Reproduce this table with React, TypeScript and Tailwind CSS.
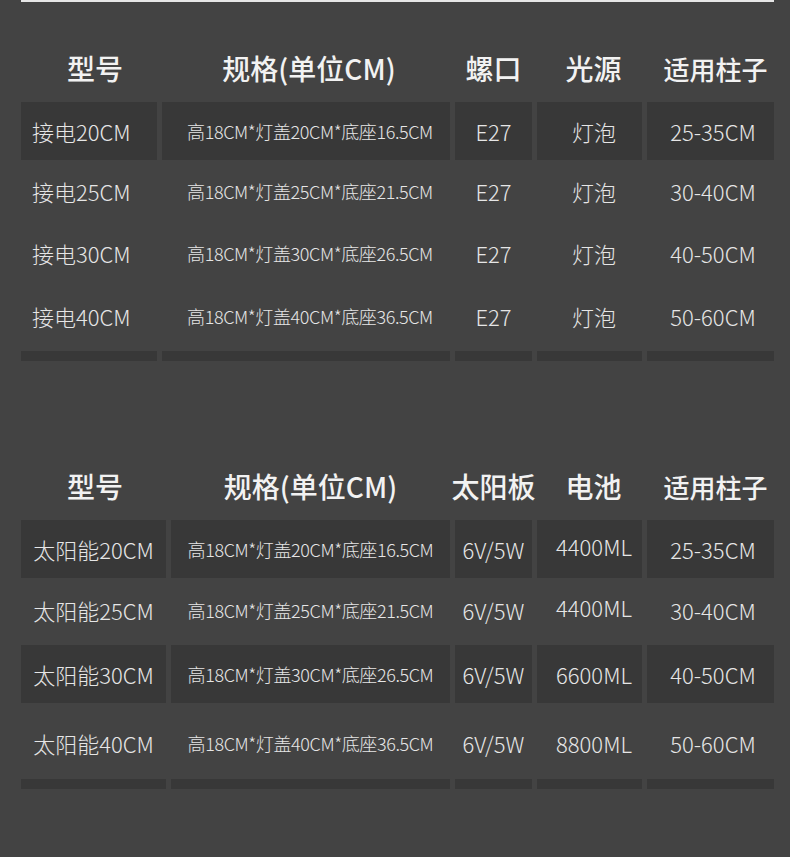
type Col = {
  w: string;
  head: string;
  cell: string;
};

type Row = {
  mt: string;
  shaded: boolean;
  cells: string[];
};

const shared: Col[] = [
  { w: "w-[77px]", head: "text-[28px]", cell: "text-[22px]" },
  { w: "w-[105px]", head: "pl-[8px] text-[28px]", cell: "pl-[9px] text-[22px]" },
  { w: "w-[127px]", head: "pl-[10px] text-[26px]", cell: "pl-[5px] text-[22px]" },
];

const wiredCols: Col[] = [
  { w: "w-[136px]", head: "pl-[12px] text-[28px]", cell: "justify-start pl-[11px] text-[22px]" },
  { w: "w-[288px]", head: "pl-[6px] text-[28px]", cell: "pl-[8px] text-[18px] tracking-[-0.4px]" },
  ...shared,
];

const solarCols: Col[] = [
  { w: "w-[145px]", head: "pl-[3px] text-[28px]", cell: "text-[22px]" },
  { w: "w-[279px]", head: "text-[28px]", cell: "text-[18px] tracking-[-0.4px]" },
  ...shared,
];

const wiredRows: Row[] = [
  { mt: "mt-[14px]", shaded: true, cells: ["接电20CM", "高18CM*灯盖20CM*底座16.5CM", "E27", "灯泡", "25-35CM"] },
  { mt: "mt-[2px]", shaded: false, cells: ["接电25CM", "高18CM*灯盖25CM*底座21.5CM", "E27", "灯泡", "30-40CM"] },
  { mt: "mt-[4px]", shaded: false, cells: ["接电30CM", "高18CM*灯盖30CM*底座26.5CM", "E27", "灯泡", "40-50CM"] },
  { mt: "mt-[5px]", shaded: false, cells: ["接电40CM", "高18CM*灯盖40CM*底座36.5CM", "E27", "灯泡", "50-60CM"] },
];

const solarRows: Row[] = [
  { mt: "mt-[14px]", shaded: true, cells: ["太阳能20CM", "高18CM*灯盖20CM*底座16.5CM", "6V/5W", "4400ML", "25-35CM"] },
  { mt: "mt-[3px]", shaded: false, cells: ["太阳能25CM", "高18CM*灯盖25CM*底座21.5CM", "6V/5W", "4400ML", "30-40CM"] },
  { mt: "mt-[6px]", shaded: true, cells: ["太阳能30CM", "高18CM*灯盖30CM*底座26.5CM", "6V/5W", "6600ML", "40-50CM"] },
  { mt: "mt-[11px]", shaded: false, cells: ["太阳能40CM", "高18CM*灯盖40CM*底座36.5CM", "6V/5W", "8800ML", "50-60CM"] },
];

const SpecTable = ({
  cols,
  heads,
  rows,
  stripMt,
}: {
  cols: Col[];
  heads: string[];
  rows: Row[];
  stripMt: string;
}) => {
  return (
    <div className="flex flex-col">
      {/* Header */}
      <div className="flex h-[40px] gap-[5px]">
        {heads.map((h, i) => (
          <div
            key={h}
            className={`${cols[i].w} ${cols[i].head} flex shrink-0 items-center justify-center whitespace-nowrap font-medium text-[#f2f2f2]`}
          >
            {h}
          </div>
        ))}
      </div>

      {/* Rows */}
      {rows.map((r) => (
        <div key={r.cells[0]} className={`${r.mt} flex h-[58px] gap-[5px]`}>
          {r.cells.map((c, i) => (
            <div
              key={i}
              className={`${cols[i].w} ${cols[i].cell} ${r.shaded ? "bg-[#383838]" : ""} flex shrink-0 items-center justify-center whitespace-nowrap font-light text-[#e6e6e6]`}
            >
              <span className={c.endsWith("ML") && c.startsWith("44") ? "-mt-[5px]" : ""}>{c}</span>
            </div>
          ))}
        </div>
      ))}

      {/* Cut-off row */}
      <div className={`${stripMt} flex h-[10px] gap-[5px]`}>
        {cols.map((c, i) => (
          <div key={i} className={`${c.w} shrink-0 bg-[#383838]`} />
        ))}
      </div>
    </div>
  );
};

export default function App() {
  return (
    <div
      className="h-[857px] w-[790px] bg-[#434343] pl-[21px] pr-[16px]"
      style={{ fontFamily: '"Noto Sans CJK SC", "Noto Sans", sans-serif' }}
    >
      <div className="h-[2px] w-[753px] bg-[#e6e6e6]" />

      <div className="mt-[46px]">
        <SpecTable
          cols={wiredCols}
          heads={["型号", "规格(单位CM)", "螺口", "光源", "适用柱子"]}
          rows={wiredRows}
          stripMt="mt-[6px]"
        />
      </div>

      <div className="mt-[105px]">
        <SpecTable
          cols={solarCols}
          heads={["型号", "规格(单位CM)", "太阳板", "电池", "适用柱子"]}
          rows={solarRows}
          stripMt="mt-[7px]"
        />
      </div>
    </div>
  );
}
